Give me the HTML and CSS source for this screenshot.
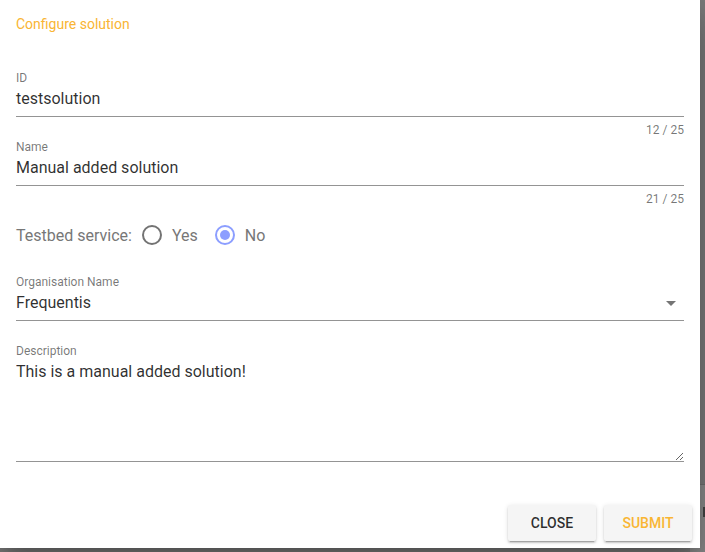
FILE: index.html
```html
<!DOCTYPE html>
<html>
<head>
<meta charset="utf-8">
<link rel="stylesheet" href="styles.css">
</head>
<body>
<div class="backdrop-content"><span class="peek"></span></div>
<div class="dialog">
  <h2 class="title">Configure solution</h2>

  <div class="field first">
    <div class="label">ID</div>
    <div class="value">testsolution</div>
  </div>
  <div class="counter">12 / 25</div>

  <div class="field tight">
    <div class="label">Name</div>
    <div class="value">Manual added solution</div>
  </div>
  <div class="counter">21 / 25</div>

  <div class="radio-row">
    <span class="radio-label">Testbed service:</span>
    <span class="radio"></span><span class="opt">Yes</span>
    <span class="radio checked"></span><span class="opt">No</span>
  </div>

  <div class="field org">
    <div class="label">Organisation Name</div>
    <div class="value select"><span>Frequentis</span><span class="arrow"></span></div>
  </div>

  <div class="field desc">
    <div class="label">Description</div>
    <textarea class="area" readonly>This is a manual added solution!</textarea>
  </div>

  <div class="actions">
    <button class="btn">CLOSE</button>
    <button class="btn primary">SUBMIT</button>
  </div>
</div>
</body>
</html>
```
FILE: styles.css
```css
html, body {
  margin: 0;
  padding: 0;
}
body {
  width: 705px;
  height: 552px;
  background: #7b7b7b;
  font-family: Roboto, "Liberation Sans", sans-serif;
  position: relative;
  overflow: hidden;
}
.backdrop-content {
  position: absolute;
  left: 690px;
  top: 484px;
  width: 20px;
  height: 68px;
  background: #8a8a8a;
  border-top: 1px solid #6e6e6e;
}
.peek {
  position: absolute;
  left: 13px;
  top: 22px;
  width: 2px;
  height: 10px;
  background: #444;
}
.dialog {
  position: relative;
  width: 700px;
  height: 548px;
  box-sizing: border-box;
  background: #fff;
  padding: 16px 16px 0 16px;
  box-shadow: 0 11px 15px -7px rgba(0,0,0,.2), 0 24px 38px 3px rgba(0,0,0,.14), 0 9px 46px 8px rgba(0,0,0,.12);
}
.title {
  margin: 0;
  font-size: 14px;
  line-height: 16px;
  font-weight: 400;
  color: #f9b533;
}
.field {
  border-bottom: 1px solid #949494;
  width: 668px;
}
.field.first { margin-top: 39px; }
.field.tight { margin-top: 3px; }
.label {
  font-size: 12px;
  line-height: 14px;
  color: rgba(0,0,0,.54);
  height: 14px;
}
.value {
  margin-top: 4px;
  font-size: 16px;
  line-height: 20px;
  color: rgba(0,0,0,.82);
  padding-bottom: 7px;
}
.counter {
  width: 668px;
  text-align: right;
  font-size: 12px;
  line-height: 14px;
  margin-top: 6px;
  color: rgba(0,0,0,.54);
}
.radio-row {
  margin-top: 19px;
  display: flex;
  align-items: center;
  height: 20px;
  font-size: 16px;
  color: #777;
}
.radio-label { margin-right: 10px; }
.radio {
  width: 20px;
  height: 20px;
  box-sizing: border-box;
  border: 2px solid #737373;
  border-radius: 50%;
  position: relative;
  margin-right: 10px;
}
.radio.checked { border-color: #8c9eff; }
.radio.checked::after {
  content: "";
  position: absolute;
  left: 3px;
  top: 3px;
  width: 10px;
  height: 10px;
  border-radius: 50%;
  background: #8c9eff;
}
.opt { margin-right: 17px; }
.field.org { margin-top: 30px; }
.select {
  display: flex;
  justify-content: space-between;
  align-items: center;
}
.arrow {
  width: 0;
  height: 0;
  border-left: 5px solid transparent;
  border-right: 5px solid transparent;
  border-top: 5px solid #757575;
  margin-right: 8px;
}
.field.desc { margin-top: 23px; }
.area {
  display: block;
  width: 100%;
  box-sizing: border-box;
  height: 99px;
  margin: 4px 0 0 0;
  padding: 0;
  border: none;
  outline: none;
  resize: vertical;
  font-family: Roboto, "Liberation Sans", sans-serif;
  font-size: 16px;
  line-height: 20px;
  color: rgba(0,0,0,.82);
  background: transparent;
}
.actions {
  display: flex;
  justify-content: flex-end;
  gap: 8px;
  margin: 43px -8px 0 0;
}
.btn {
  min-width: 88px;
  height: 36px;
  padding: 0 16px;
  border: none;
  border-radius: 2px;
  background: #f5f5f5;
  font-family: Roboto, "Liberation Sans", sans-serif;
  font-size: 14px;
  font-weight: 500;
  color: rgba(0,0,0,.82);
  box-shadow: 0 2px 2px 0 rgba(0,0,0,.14), 0 3px 1px -2px rgba(0,0,0,.2), 0 1px 5px 0 rgba(0,0,0,.12);
}
.btn.primary { color: #f9b533; }
```
